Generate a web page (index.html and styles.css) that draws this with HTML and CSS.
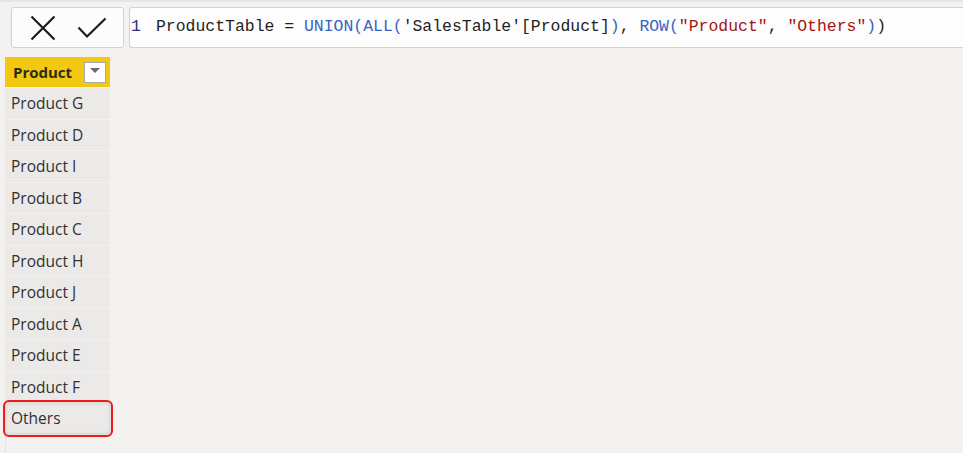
FILE: index.html
```html
<!DOCTYPE html>
<html>
<head>
<meta charset="utf-8">
<link rel="stylesheet" href="styles.css">
</head>
<body>
<div class="topline"></div>
<div class="toolbar">
  <div class="buttons">
    <svg class="icon-x" width="26" height="26" viewBox="0 0 26 26"><path d="M1.5 1.5 L24.5 24.5 M24.5 1.5 L1.5 24.5" stroke="#1b1b1b" stroke-width="2.2" fill="none"/></svg>
    <svg class="icon-check" width="30" height="22" viewBox="0 0 30 22"><path d="M1.5 10.5 L10 19.5 L28.5 1.5" stroke="#1b1b1b" stroke-width="2.2" fill="none"/></svg>
  </div>
  <div class="formula">
    <span class="ln">1</span><span class="code">ProductTable = <span class="fn">UNION(ALL(</span>'SalesTable'[Product]<span class="fn">)</span>, <span class="fn">ROW(</span><span class="str">"Product"</span>, <span class="str">"Others"</span><span class="fn">)</span>)</span>
  </div>
</div>
<div class="table">
  <div class="head"><span>Product</span><span class="dd"><svg width="10" height="6" viewBox="0 0 10 6"><path d="M0 0 L10 0 L5 5 Z" fill="#6b6b6b"/></svg></span></div>
  <div class="row">Product G</div>
  <div class="row">Product D</div>
  <div class="row">Product I</div>
  <div class="row">Product B</div>
  <div class="row">Product C</div>
  <div class="row">Product H</div>
  <div class="row">Product J</div>
  <div class="row">Product A</div>
  <div class="row">Product E</div>
  <div class="row">Product F</div>
  <div class="row last"><span class="hl">Others</span></div>
  <div class="rest"></div>
</div>
</body>
</html>
```
FILE: styles.css
```css
html, body {
  margin: 0;
  padding: 0;
  height: 100%;
}
body {
  background: #f3f2f1;
  overflow: hidden;
  display: flex;
  flex-direction: column;
}
.topline {
  height: 2px;
  background: #e7e6e5;
  flex: none;
}
.toolbar {
  display: flex;
  gap: 5px;
  padding: 5px 0 0 11px;
  height: 41px;
  flex: none;
}
.buttons {
  height: 39px;
  border: 1px solid #d2d2d2;
  border-radius: 3px;
  background: #fcfcfc;
  display: flex;
  align-items: center;
  padding-left: 18px;
  box-sizing: content-box;
  width: 93px;
}
.icon-check { margin-left: 21px; margin-top: 1px; }
.formula {
  flex: 1;
  border: 1px solid #d2d2d2;
  border-right: none;
  border-radius: 3px 0 0 3px;
  background: #fdfdfd;
  display: flex;
  align-items: center;
  font-family: "Liberation Mono", monospace;
  font-size: 16.45px;
  white-space: pre;
  color: #1f1f1f;
  padding-bottom: 2px;
  box-sizing: border-box;
  height: 41px;
}
.ln {
  color: #2b2b78;
  margin-left: 1px;
  width: 25px;
}
.code { color: #1f1f1f; }
.fn { color: #3a62c4; }
.str { color: #a31515; }

.table {
  margin: 9px 0 0 5px;
  width: 105px;
  flex: 1;
  display: flex;
  flex-direction: column;
  font-family: "Open Sans", sans-serif;
  font-size: 15.5px;
  color: #333030;
}
.head {
  height: 30px;
  background: #f2c811;
  display: flex;
  align-items: center;
  justify-content: space-between;
  padding: 0 4px 0 8px;
  font-weight: bold;
  font-size: 15px;
  color: #2e2a1a;
  flex: none;
}
.dd {
  width: 20px;
  height: 19px;
  background: #fff;
  border: 1px solid #a9a9a9;
  display: flex;
  align-items: center;
  justify-content: center;
}
.dd svg { margin-top: -2px; }
.row {
  height: 30.5px;
  margin-top: 1px;
  background: #ebeae9;
  display: flex;
  align-items: center;
  padding-left: 6px;
  flex: none;
}
.row.last {
  position: relative;
}
.hl::after {
  content: "";
  position: absolute;
  left: -2px;
  top: -3px;
  width: 106px;
  height: 33px;
  border: 2px solid #f01a1a;
  border-radius: 6px;
  box-shadow: inset 0 0 4px rgba(0,0,0,0.18);
}
.rest {
  flex: 1;
  margin-top: 1px;
  border-left: 1px solid #e3e2e1;
}
```
